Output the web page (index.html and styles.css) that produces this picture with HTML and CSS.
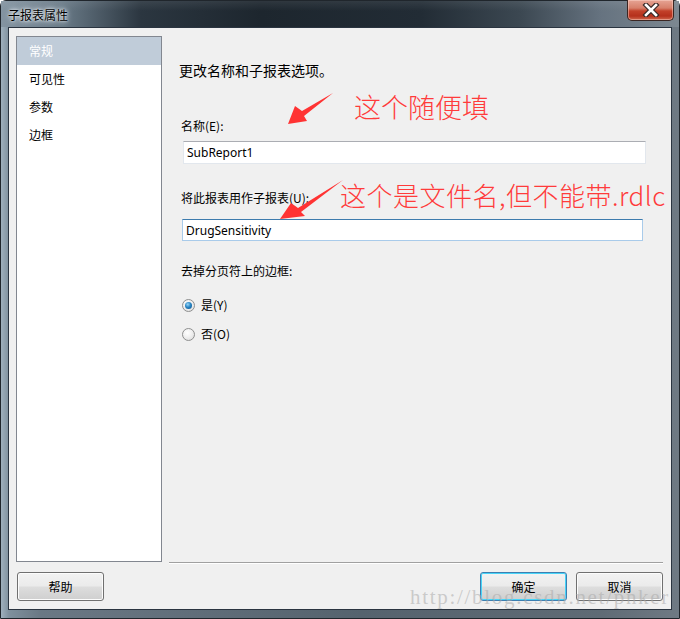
FILE: index.html
```html
<!DOCTYPE html>
<html>
<head>
<meta charset="utf-8">
<link rel="stylesheet" href="styles.css">
</head>
<body>
<div class="win">
  <div class="titlebar">
    <span class="title">子报表属性</span>
    <div class="close">
      <svg width="20" height="14" viewBox="0 0 20 14">
        <path d="M5 2 L15 12 M15 2 L5 12" stroke="#3a2a28" stroke-width="5" stroke-linecap="square"/>
        <path d="M5 2 L15 12 M15 2 L5 12" stroke="#ffffff" stroke-width="2.6" stroke-linecap="square"/>
      </svg>
    </div>
  </div>
  <div class="client">
    <div class="main">
      <ul class="nav">
        <li class="sel">常规</li>
        <li>可见性</li>
        <li>参数</li>
        <li>边框</li>
      </ul>
      <div class="panel">
        <div class="content">
          <div class="head">更改名称和子报表选项。</div>
          <div class="label l1">名称(E):</div>
          <div class="input i1">SubReport1</div>
          <div class="label l2">将此报表用作子报表(U):</div>
          <div class="input i2">DrugSensitivity</div>
          <div class="label l3">去掉分页符上的边框:</div>
          <div class="radio r1"><span class="dot on"></span><span>是(Y)</span></div>
          <div class="radio r2"><span class="dot"></span><span>否(O)</span></div>
        </div>
        <div class="sep"></div>
      </div>
    </div>
    <div class="buttons">
      <div class="btn">帮助</div>
      <div class="right">
        <div class="btn def">确定</div>
        <div class="btn">取消</div>
      </div>
    </div>
  </div>
  <svg class="arrows" width="680" height="619" viewBox="0 0 680 619">
    <polygon points="333,93 302,111 295,106 288,124 307,121 304,116" fill="#ff3333"/>
    <polygon points="343,180 298,208 291,203 280,219 305,216 301,212" fill="#ff3333"/>
  </svg>
  <div class="note n1">这个随便填</div>
  <div class="note n2">这个是文件名,但不能带.rdlc</div>
  <div class="wm">http://blog.csdn.net/pnker</div>
</div>
</body>
</html>
```

FILE: styles.css
```css
* { box-sizing: border-box; }
html, body { margin: 0; padding: 0; }
body {
  width: 680px;
  height: 619px;
  overflow: hidden;
  font-family: "Noto Sans CJK SC", "Noto Sans", sans-serif;
  font-size: 12px;
  color: #000;
}
.win {
  position: relative;
  width: 680px;
  height: 619px;
  display: flex;
  flex-direction: column;
  padding: 0 7px 8px 7px;
  border: 1px solid #20262c;
  border-radius: 6px 6px 0 0;
  background:
    linear-gradient(90deg, #9fb0bd 0px, #7f909d 8px, #6a7884 40px, #55636e 360px, #5f6b75 600px, #6f7a84 680px);
}
.titlebar {
  height: 28px;
  margin: 0 -7px;
  position: relative;
  background:
    linear-gradient(180deg, rgba(255,255,255,0.08) 0, rgba(255,255,255,0) 10px),
    linear-gradient(90deg, #8494a1 0px, #6a7b88 60px, #2b3640 140px, #1d262e 260px, #222c35 420px, #3c4852 520px, #667380 600px, #7d8891 680px);
}
.title {
  position: absolute;
  left: 7px;
  top: 6px;
  font-size: 12px;
  line-height: 16px;
  color: #000;
  text-shadow: 0 0 6px #dfe6ec, 0 0 4px #dfe6ec, 0 0 2px #e8eef2;
}
.close {
  position: absolute;
  left: 626px;
  top: -1px;
  width: 47px;
  height: 21px;
  border: 1px solid #3b2622;
  border-top: none;
  border-radius: 0 0 5px 5px;
  background: linear-gradient(180deg, #e6a494 0%, #d7806b 40%, #c2412a 55%, #b5301c 80%, #d0684e 100%);
  box-shadow: inset 0 0 0 1px rgba(255,220,210,0.45);
  display: flex;
  align-items: center;
  justify-content: center;
}
.client {
  flex: 1;
  display: flex;
  flex-direction: column;
  background: #f0f0f0;
  border: 1px solid #2a3440;
  padding: 8px 8px 8px 7px;
}
.main {
  display: flex;
  height: 526px;
}
.nav {
  list-style: none;
  margin: 0;
  padding: 0;
  width: 146px;
  height: 526px;
  background: #fff;
  border: 1px solid #828790;
}
.nav li {
  height: 28px;
  line-height: 28px;
  padding-left: 12px;
}
.nav li.sel {
  background: #c0ccd9;
  color: #fff;
}
.panel {
  flex: 1;
  margin-left: 7px;
  display: flex;
  flex-direction: column;
}
.content {
  flex: 1;
  padding: 25px 0 0 12px;
}
.head {
  font-size: 14px;
  line-height: 18px;
  margin-left: -2px;
}
.label {
  line-height: 16px;
}
.l1 { margin-top: 39px; }
.l2 { margin-top: 26px; }
.l3 { margin-top: 22px; }
.input {
  background: #fff;
  font-family: "Noto Sans", "Noto Sans CJK SC", sans-serif;
  font-size: 12px;
  padding-left: 3px;
  display: flex;
  align-items: center;
}
.i1 {
  margin-top: 7px;
  margin-left: 2px;
  width: 463px;
  height: 23px;
  border: 1px solid #e2e7ed;
  border-top-color: #abadb3;
}
.i2 {
  margin-top: 13px;
  margin-left: 1px;
  width: 461px;
  height: 22px;
  border: 1px solid #a9cbea;
  border-top-color: #3d7bad;
}
.radio {
  display: flex;
  align-items: center;
  line-height: 16px;
  margin-left: 1px;
  gap: 6px;
}
.r1 { margin-top: 18px; }
.r2 { margin-top: 13px; }
.dot {
  width: 13px;
  height: 13px;
  border-radius: 50%;
  border: 1px solid #8e8f8f;
  background: radial-gradient(circle at 40% 35%, #ffffff 0, #f2f2f2 40%, #d8d8d8 100%);
  display: inline-flex;
  align-items: center;
  justify-content: center;
}
.dot.on::after {
  content: "";
  width: 7px;
  height: 7px;
  border-radius: 50%;
  background: radial-gradient(circle at 40% 35%, #9ad6f7 0, #2a86c4 45%, #0b4d86 100%);
}
.sep {
  height: 2px;
  border-top: 1px solid #a0a0a0;
  border-bottom: 1px solid #ffffff;
  margin-bottom: -2px;
}
.buttons {
  margin-top: 10px;
  display: flex;
  justify-content: space-between;
  padding-left: 1px;
}
.right {
  display: flex;
  gap: 9px;
}
.btn {
  width: 87px;
  height: 29px;
  border: 1px solid #707070;
  border-radius: 3px;
  background: linear-gradient(180deg, #f2f2f2 0%, #ebebeb 48%, #dddddd 52%, #cfcfcf 100%);
  box-shadow: inset 0 0 0 1px #fcfcfc;
  display: flex;
  align-items: center;
  justify-content: center;
  font-size: 12px;
}
.btn.def {
  border-color: #3c7fb1;
  box-shadow: inset 0 0 0 1px #48d4f8;
}
.arrows {
  position: absolute;
  left: -1px;
  top: -1px;
  pointer-events: none;
}
.note {
  position: absolute;
  color: #ff3b3b;
  font-family: "Noto Sans CJK SC", sans-serif;
  font-weight: 300;
  white-space: nowrap;
}
.n1 {
  left: 353px;
  top: 89px;
  font-size: 27px;
  line-height: 34px;
}
.n2 {
  left: 339px;
  top: 178px;
  font-size: 26px;
  line-height: 32px;
  letter-spacing: 0.5px;
}
.wm {
  position: absolute;
  left: 409px;
  top: 584px;
  font-family: "Liberation Serif", serif;
  font-size: 21px;
  line-height: 24px;
  letter-spacing: 1.7px;
  color: rgba(170, 170, 170, 0.55);
  white-space: nowrap;
}
```
